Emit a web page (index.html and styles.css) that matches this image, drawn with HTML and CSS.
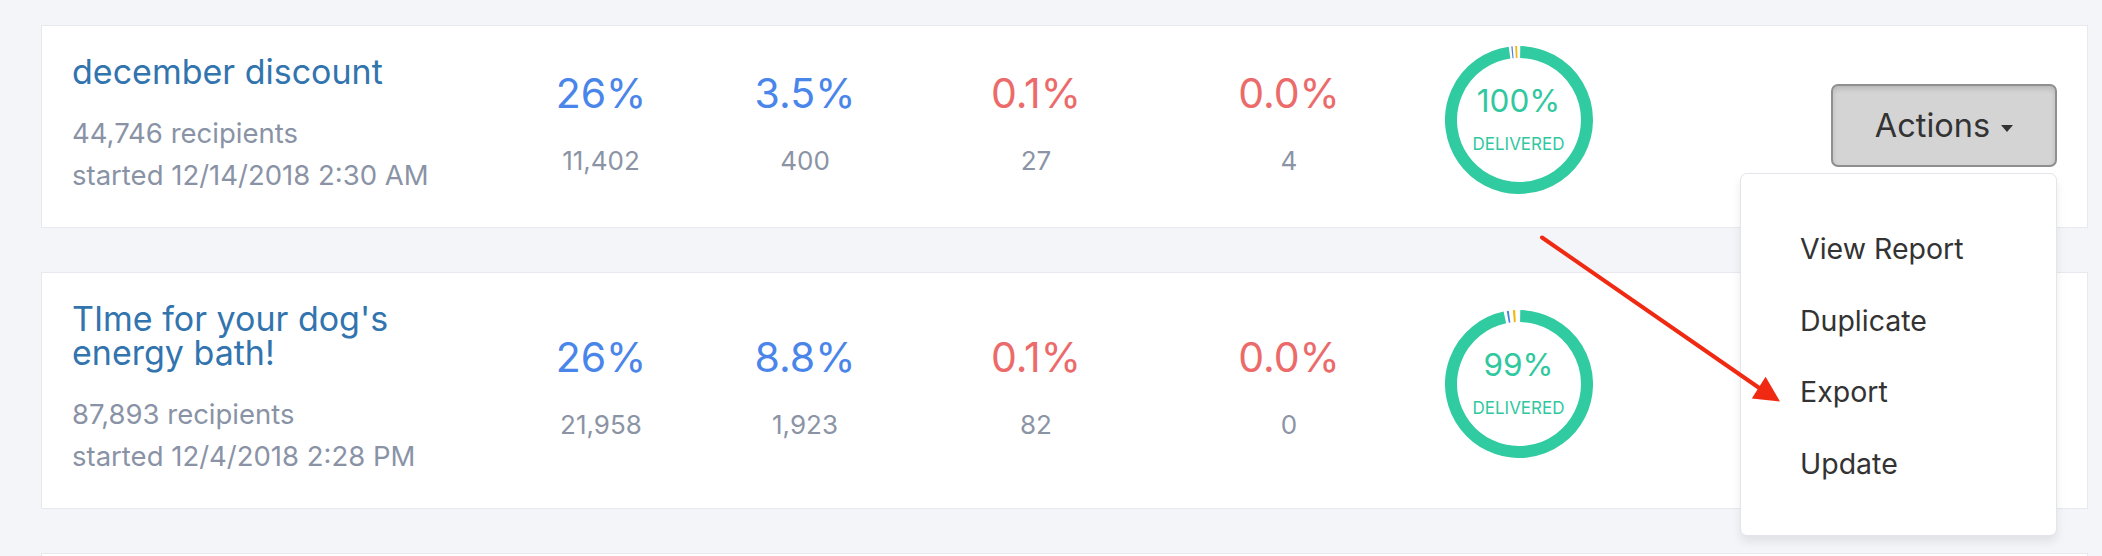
FILE: index.html
```html
<!DOCTYPE html>
<html lang="en">
<head>
<meta charset="utf-8">
<title>Campaigns</title>
<link rel="stylesheet" href="styles.css">
</head>
<body>
<div class="page">
  <div class="card">
    <div class="info">
      <a class="title" href="#">december discount</a>
      <div class="meta">44,746 recipients</div>
      <div class="meta">started 12/14/2018 2:30 AM</div>
    </div>
    <div class="metric m1"><div class="pct blue">26%</div><div class="num">11,402</div></div>
    <div class="metric m2"><div class="pct blue">3.5%</div><div class="num">400</div></div>
    <div class="metric m3"><div class="pct red">0.1%</div><div class="num">27</div></div>
    <div class="metric m4"><div class="pct red">0.0%</div><div class="num">4</div></div>
    <div class="donut-col">
      <div class="donut">
        <svg class="ring" width="148" height="148" viewBox="0 0 148 148">
          <path d="M75.19 6.01 A68 68 0 1 1 64.54 6.66" class="seg-green"/>
          <path d="M66.89 6.37 A68 68 0 0 1 68.07 6.26" class="seg-blue"/>
          <path d="M70.56 6.09 A68 68 0 0 1 72.22 6.02" class="seg-yellow"/>
        </svg>
        <div class="donut-label"><div class="donut-pct">100%</div><div class="donut-cap">DELIVERED</div></div>
      </div>
    </div>
    <div class="actions">
      <div class="dropdown">
        <button class="btn" type="button">Actions<span class="caret"></span></button>
        <ul class="menu">
          <li>View Report</li>
          <li>Duplicate</li>
          <li>Export</li>
          <li>Update</li>
        </ul>
      </div>
    </div>
  </div>

  <div class="card">
    <div class="info">
      <a class="title" href="#">TIme for your dog's energy bath!</a>
      <div class="meta">87,893 recipients</div>
      <div class="meta">started 12/4/2018 2:28 PM</div>
    </div>
    <div class="metric m1"><div class="pct blue">26%</div><div class="num">21,958</div></div>
    <div class="metric m2"><div class="pct blue">8.8%</div><div class="num">1,923</div></div>
    <div class="metric m3"><div class="pct red">0.1%</div><div class="num">82</div></div>
    <div class="metric m4"><div class="pct red">0.0%</div><div class="num">0</div></div>
    <div class="donut-col">
      <div class="donut">
        <svg class="ring" width="148" height="148" viewBox="0 0 148 148">
          <path d="M75.19 6.01 A68 68 0 1 1 59.86 7.49" class="seg-green"/>
          <path d="M62.78 6.93 A68 68 0 0 1 64.54 6.66" class="seg-blue"/>
          <path d="M68.43 6.23 A68 68 0 0 1 70.44 6.09" class="seg-yellow"/>
        </svg>
        <div class="donut-label"><div class="donut-pct">99%</div><div class="donut-cap">DELIVERED</div></div>
      </div>
    </div>
    <div class="actions"></div>
  </div>

  <div class="card card-empty"></div>

  <svg class="annotation" width="2102" height="556" viewBox="0 0 2102 556">
    <line x1="1542" y1="237.5" x2="1760" y2="388.5" class="arrow-line"/>
    <polygon points="1780,401.5 1765.6,376.7 1751.8,398.4" class="arrow-head"/>
  </svg>
</div>
</body>
</html>
```
FILE: styles.css
```css
* { box-sizing: border-box; }

html, body {
  margin: 0;
  background: #f4f5f9;
}

body {
  font-family: "Inter", "Noto Sans", sans-serif;
  color: #333;
}

.page {
  position: relative;
  display: flex;
  flex-direction: column;
  gap: 44px;
  padding: 25px 14px 0 41px;
  height: 556px;
  overflow: hidden;
}

.card {
  display: flex;
  align-items: center;
  background: #fff;
  border: 1px solid #e7e9ee;
  padding: 29px 30px 31px 30px;
  flex: none;
}

.card-empty {
  min-height: 200px;
}

/* left block */
.info {
  flex: 0 0 427px;
  display: flex;
  flex-direction: column;
}

.title {
  display: block;
  max-width: 400px;
  font-size: 34px;
  line-height: 34px;
  color: #3274ae;
  text-decoration: none;
  margin-bottom: 23px;
}

.meta {
  font-size: 27.5px;
  line-height: 42px;
  color: #8a93a6;
  white-space: nowrap;
}

/* metrics */
.metric {
  flex: none;
  display: flex;
  flex-direction: column;
  align-items: center;
  text-align: center;
  margin-bottom: 4px;
}
.m1 { width: 204px; }
.m2 { width: 204px; }
.m3 { width: 258px; }
.m4 { width: 248px; }

.pct {
  font-size: 41px;
  line-height: 48px;
  margin-bottom: 26px;
}
.blue { color: #4a85ea; }
.red { color: #ec6a6a; }

.num {
  font-size: 26px;
  line-height: 36px;
  color: #8b94a5;
}

/* donut */
.donut-col {
  flex: 0 0 211px;
  display: flex;
  justify-content: center;
  margin: -16px 0 -4px;
}

.donut {
  display: grid;
  width: 148px;
  height: 148px;
}

.ring,
.donut-label {
  grid-area: 1 / 1;
}

.ring path {
  fill: none;
  stroke-width: 12;
}
.seg-green { stroke: #30cba0; }
.seg-blue { stroke: #4a7fe0; }
.seg-yellow { stroke: #f2b705; }

.donut-label {
  display: flex;
  flex-direction: column;
  align-items: center;
  justify-content: center;
  padding-bottom: 2px;
  color: #30c89e;
}

.donut-pct {
  font-size: 31.5px;
  line-height: 34px;
  margin-bottom: 16px;
}

.donut-cap {
  font-size: 17px;
  line-height: 20px;
}

/* actions */
.actions {
  flex: 1;
  display: flex;
  justify-content: flex-end;
}

.dropdown {
  position: relative;
}

.btn {
  display: flex;
  align-items: center;
  justify-content: center;
  gap: 11px;
  width: 226px;
  height: 83px;
  padding: 0;
  background: #d4d4d4;
  border: 2px solid #8f8f8f;
  border-radius: 7px;
  box-shadow: inset 0 3px 5px rgba(0, 0, 0, 0.13);
  font-family: "Inter", "Noto Sans", sans-serif;
  font-size: 32.5px;
  color: #333;
}

.caret {
  width: 0;
  height: 0;
  border-top: 7px solid #333;
  border-left: 6.5px solid transparent;
  border-right: 6.5px solid transparent;
  margin-top: 5px;
}

.menu {
  position: absolute;
  top: calc(100% + 6px);
  right: 0;
  z-index: 10;
  width: 317px;
  margin: 0;
  padding: 39px 0 36px;
  list-style: none;
  background: #fff;
  border: 1px solid #e3e5ea;
  border-radius: 7px;
  box-shadow: 0 6px 10px rgba(0, 0, 0, 0.08);
}

.menu li {
  padding-left: 59px;
  font-size: 28.5px;
  line-height: 71.5px;
  color: #333;
}

/* annotation arrow */
.annotation {
  position: absolute;
  top: 0;
  left: 0;
  z-index: 20;
  pointer-events: none;
}

.arrow-line {
  stroke: #f02a12;
  stroke-width: 4;
  stroke-linecap: round;
}

.arrow-head {
  fill: #f02a12;
}
```
